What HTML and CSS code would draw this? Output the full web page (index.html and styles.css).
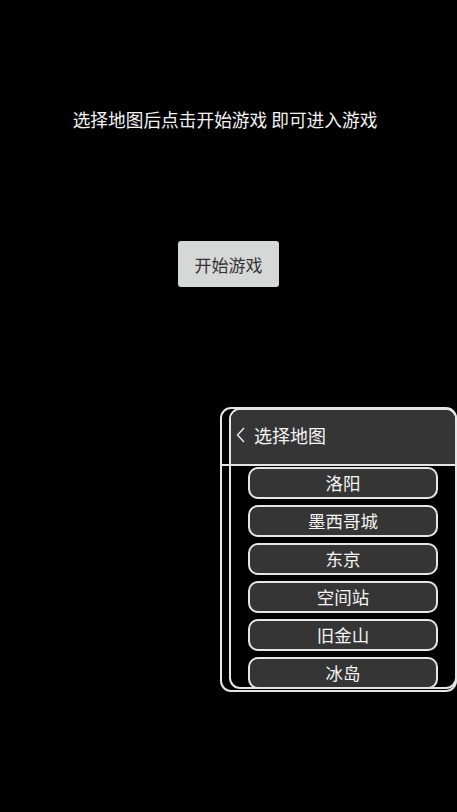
FILE: index.html
```html
<!DOCTYPE html>
<html lang="zh">
<head>
    <meta charset="UTF-8">
    <meta name="viewport" content="width=device-width, initial-scale=1.0">
    <title>选择地图</title>
    <link rel="stylesheet" href="styles.css">
</head>
<body>
    <p class="hint">选择地图后点击开始游戏 即可进入游戏</p>
    <button class="start">开始游戏</button>

    <div class="panel">
        <div class="sheet">
            <div class="sheet-head">
                <svg class="back" width="10" height="16" viewBox="0 0 10 16">
                    <polyline points="8,1 1.5,8 8,15" fill="none" stroke="#eee" stroke-width="1.4"/>
                </svg>
                <span class="sheet-title">选择地图</span>
            </div>
            <div class="maps">
                <button class="map">洛阳</button>
                <button class="map">墨西哥城</button>
                <button class="map">东京</button>
                <button class="map">空间站</button>
                <button class="map">旧金山</button>
                <button class="map">冰岛</button>
            </div>
        </div>
    </div>
</body>
</html>
```

FILE: styles.css
```css
html, body {
    margin: 0;
    padding: 0;
    background: #000;
    font-family: "Noto Sans CJK SC", "Noto Sans", sans-serif;
    color: #f2f2f2;
}
body {
    width: 457px;
    height: 812px;
    overflow: hidden;
    display: flex;
    flex-direction: column;
    align-items: center;
}
.hint {
    margin: 107px 7px 0 0;
    font-size: 17.7px;
    line-height: 24px;
    color: #f4f4f4;
}
.start {
    margin-top: 110px;
    width: 101px;
    height: 46px;
    border: none;
    border-radius: 3px;
    background: #d6d7d7;
    color: #333;
    font-family: inherit;
    font-size: 17px;
    padding: 0;
}

/* map chooser */
.panel {
    position: relative;
    align-self: flex-start;
    margin: 120px 0 0 220px;
    width: 237px;
    height: 285px;
    box-sizing: border-box;
    border: 2px solid #e6e6e6;
    border-radius: 11px;
    display: flex;
}
.panel::before {
    content: '';
    position: absolute;
    left: 0;
    right: 0;
    top: 55px;
    height: 2px;
    background: #e6e6e6;
}
.sheet {
    flex: 1;
    margin: -1px -2px 1px 7px;
    border: 2px solid #e6e6e6;
    border-radius: 11px;
    display: flex;
    flex-direction: column;
}
.sheet-head {
    flex-shrink: 0;
    box-sizing: border-box;
    height: 55px;
    padding: 0 0 5px 5px;
    background: #353535;
    border-radius: 9px 9px 0 0;
    display: flex;
    align-items: center;
    gap: 8px;
}
.back {
    display: block;
}
.sheet-title {
    font-size: 18px;
    color: #f4f4f4;
}
.maps {
    margin-top: 2px;
    display: flex;
    flex-direction: column;
    gap: 6px;
    padding: 0 17px;
}
.map {
    flex-shrink: 0;
    height: 32px;
    border: 2px solid #e6e6e6;
    border-radius: 10px;
    background: #353535;
    color: #f4f4f4;
    font-family: inherit;
    font-size: 17.5px;
    line-height: 1;
    padding: 0;
}
```
